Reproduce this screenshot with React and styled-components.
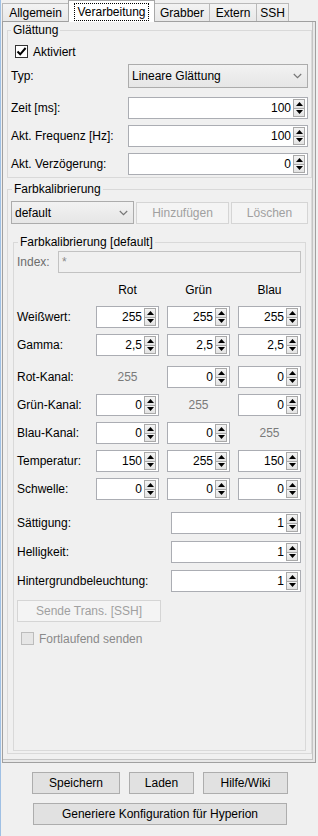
import React from 'react';
import styled, { createGlobalStyle } from 'styled-components';

const Global = createGlobalStyle`
  html, body { margin: 0; padding: 0; background: #f0f0f0; }
  body { font-family: "Liberation Sans", Arial, sans-serif; font-size: 12px; color: #000; }
  * { box-sizing: border-box; }
`;

const Window = styled.div`
  width: 318px;
  height: 836px;
  background: #f0f0f0;
  border-left: 1px solid #9fc0e4;
  padding-left: 1px;
  display: flex;
  flex-direction: column;
  overflow: hidden;
`;

const TabBar = styled.div`
  display: flex;
  align-items: flex-end;
  height: 21px;
  position: relative;
  z-index: 2;
`;

const Tab = styled.div`
  width: ${p => p.$w}px;
  height: ${p => (p.$active ? 22 : 18)}px;
  margin-bottom: ${p => (p.$active ? -1 : 0)}px;
  margin-left: ${p => (p.$first ? 0 : -1)}px;
  border: 1px solid ${p => (p.$active ? '#a8a8a8' : '#b9b9b9')};
  border-bottom: none;
  background: ${p => (p.$active ? '#ffffff' : 'linear-gradient(#f3f3f3, #e8e8e8)')};
  display: flex;
  align-items: center;
  justify-content: center;
  position: relative;
  z-index: ${p => (p.$active ? 2 : 1)};
  line-height: 14px;
`;

const TabFocus = styled.span`
  outline: 1px dotted #000;
  outline-offset: 1px;
  padding: 0 1px;
`;

const Panel = styled.div`
  width: 314px;
  height: 742px;
  border: 1px solid #a0a0a0;
  box-shadow: inset -2px -2px 0 #e8e8e8, inset -3px -3px 0 #c4c4c4;
  padding: 0 3px 8px 4px;
  display: flex;
  flex-direction: column;
`;

const Group = styled.div`
  margin: ${p => p.$m || '0'};
  padding: ${p => p.$pad};
  border: 1px solid #d9d9d9;
  display: flex;
  flex-direction: column;
  flex: ${p => (p.$grow ? '1 1 auto' : 'none')};
`;

const Title = styled.div`
  align-self: flex-start;
  margin: -8px 0 0 ${p => p.$ml || 0}px;
  padding: 0 2px;
  line-height: 14px;
  height: 14px;
  background: #f0f0f0;
  white-space: nowrap;
`;

const Row = styled.div`
  display: grid;
  grid-template-columns: ${p => p.$cols};
  column-gap: ${p => p.$gap || 0}px;
  align-items: center;
  height: ${p => p.$h || 22}px;
  margin-top: ${p => p.$mt || 0}px;
`;

const Label = styled.span`
  color: ${p => (p.$disabled ? '#6d6d6d' : '#000')};
  white-space: nowrap;
  line-height: 14px;
`;

const Muted = styled.span`
  color: #7a7a7a;
  text-align: center;
  line-height: 14px;
`;

const Header = styled.span`
  text-align: center;
  line-height: 14px;
`;

const CheckRow = styled.label`
  display: flex;
  align-items: center;
  gap: 5px;
  height: ${p => p.$h}px;
  margin-top: ${p => p.$mt || 0}px;
  padding-left: ${p => p.$pl}px;
  color: ${p => (p.$disabled ? '#8a8a8a' : '#000')};
`;

const CheckBox = styled.span`
  width: 13px;
  height: 13px;
  border: 1px solid ${p => (p.$disabled ? '#bcbcbc' : '#333333')};
  background: ${p => (p.$disabled ? '#e6e6e6' : '#ffffff')};
  display: flex;
  align-items: center;
  justify-content: center;
`;

const SpinBox = styled.div`
  height: 22px;
  display: flex;
  align-items: stretch;
  background: #fff;
  border: 1px solid #abadb3;
`;

const SpinValue = styled.div`
  flex: 1;
  text-align: right;
  padding-right: 2px;
  line-height: 20px;
`;

const SpinButtons = styled.div`
  width: 12px;
  margin: 1px 2px 1px 0;
  display: flex;
  flex-direction: column;
  border: 1px solid #a9a9a9;
`;

const SpinHalf = styled.div`
  flex: 1;
  display: flex;
  align-items: center;
  justify-content: center;
  background: linear-gradient(#f4f4f4, #e2e2e2);
  & + & { border-top: 1px solid #a9a9a9; }
`;

const ComboBox = styled.div`
  height: ${p => p.$h}px;
  display: flex;
  align-items: center;
  justify-content: space-between;
  padding: 0 5px 0 3px;
  border: 1px solid #acacac;
  background: linear-gradient(#f2f2f2, #e6e6e6);
`;

const TextField = styled.div`
  height: 22px;
  border: 1px solid #c2c2c2;
  background: #f0f0f0;
  color: #8a8a8a;
  padding-left: 3px;
  line-height: 20px;
`;

const Button = styled.button`
  width: ${p => p.$w}px;
  height: ${p => p.$h || 22}px;
  font-family: inherit;
  font-size: 12px;
  padding: 0;
  border: 1px solid ${p => (p.disabled ? '#d5d5d5' : '#adadad')};
  background: ${p => (p.disabled ? '#f4f4f4' : '#e1e1e1')};
  color: ${p => (p.disabled ? '#a0a0a0' : '#000')};
`;

const FarbRow = styled.div`
  display: grid;
  grid-template-columns: 123px 93px 77px;
  column-gap: 2px;
  align-items: center;
  height: 23px;
  margin-top: 5px;
`;

const ButtonBar = styled.div`
  display: flex;
  justify-content: center;
  gap: ${p => p.$gap || 0}px;
  margin-top: 9px;
`;

const Up = () => (
  <svg width="7" height="4" viewBox="0 0 7 4"><polygon points="0,4 3.5,0 7,4" fill="#000" /></svg>
);
const Down = () => (
  <svg width="7" height="4" viewBox="0 0 7 4"><polygon points="0,0 3.5,4 7,0" fill="#000" /></svg>
);

const Spinner = ({ value }) => (
  <SpinBox>
    <SpinValue>{value}</SpinValue>
    <SpinButtons>
      <SpinHalf><Up /></SpinHalf>
      <SpinHalf><Down /></SpinHalf>
    </SpinButtons>
  </SpinBox>
);

const Chevron = () => (
  <svg width="9" height="6" viewBox="0 0 9 6">
    <polyline points="0.8,1 4.5,4.6 8.2,1" fill="none" stroke="#777" strokeWidth="1.2" />
  </svg>
);

const Combo = ({ text, h }) => (
  <ComboBox $h={h}>
    <span>{text}</span>
    <Chevron />
  </ComboBox>
);

const Check = () => (
  <svg width="11" height="11" viewBox="0 0 11 11">
    <polyline points="1.5,5.5 4.2,8.3 9.6,2" fill="none" stroke="#000" strokeWidth="2" />
  </svg>
);

const COLS3 = '71px 63px 63px 63px';
const COLS1 = '154px 130px';

const ColorRow = ({ label, values, mt }) => (
  <Row $cols={COLS3} $gap={8} $mt={mt}>
    <Label>{label}</Label>
    {values.map((v, i) => (v === null ? <Muted key={i}>255</Muted> : <Spinner key={i} value={v} />))}
  </Row>
);

export default function App() {
  const tabs = [
    { t: 'Allgemein', w: 67 },
    { t: 'Verarbeitung', w: 87, active: true },
    { t: 'Grabber', w: 56 },
    { t: 'Extern', w: 48 },
    { t: 'SSH', w: 33 },
  ];
  return (
    <>
      <Global />
      <Window>
        <TabBar>
          {tabs.map((tb, i) => (
            <Tab key={tb.t} $w={tb.w} $active={tb.active} $first={i === 0}>
              {tb.active ? <TabFocus>{tb.t}</TabFocus> : tb.t}
            </Tab>
          ))}
        </TabBar>
        <Panel>
          <Group $pad="0 3px 2px 3px" $m="8px 0 0 0">
            <Title>Glättung</Title>
            <CheckRow $h={17} $pl={4} $mt={6}>
              <CheckBox><Check /></CheckBox>
              Aktiviert
            </CheckRow>
            <Row $cols="117px 1fr" $h={24} $mt={4}>
              <Label>Typ:</Label>
              <Combo text="Lineare Glättung" h={24} />
            </Row>
            <Row $cols="117px 1fr" $mt={9}>
              <Label>Zeit [ms]:</Label>
              <Spinner value="100" />
            </Row>
            <Row $cols="117px 1fr" $mt={6}>
              <Label>Akt. Frequenz [Hz]:</Label>
              <Spinner value="100" />
            </Row>
            <Row $cols="117px 1fr" $mt={6}>
              <Label>Akt. Verzögerung:</Label>
              <Spinner value="0" />
            </Row>
          </Group>

          <Group $pad="0 3px 2px 3px" $m="11px 0 0 0" $grow>
            <Title $ml={1}>Farbkalibrierung</Title>
            <FarbRow>
              <Combo text="default" h={23} />
              <Button disabled $w={93}>Hinzufügen</Button>
              <Button disabled $w={77}>Löschen</Button>
            </FarbRow>

            <Group $pad="0 4px 4px 3px" $m="18px 2px 0 2px" $grow>
              <Title $ml={1}>Farbkalibrierung [default]</Title>
              <Row $cols="41px 243px" $mt={2}>
                <Label $disabled>Index:</Label>
                <TextField>*</TextField>
              </Row>
              <Row $cols={COLS3} $gap={8} $h={16} $mt={9}>
                <span />
                <Header>Rot</Header>
                <Header>Grün</Header>
                <Header>Blau</Header>
              </Row>
              <ColorRow label="Weißwert:" values={['255', '255', '255']} mt={8} />
              <ColorRow label="Gamma:" values={['2,5', '2,5', '2,5']} mt={6} />
              <ColorRow label="Rot-Kanal:" values={[null, '0', '0']} mt={10} />
              <ColorRow label="Grün-Kanal:" values={['0', null, '0']} mt={6} />
              <ColorRow label="Blau-Kanal:" values={['0', '0', null]} mt={6} />
              <ColorRow label="Temperatur:" values={['150', '255', '150']} mt={6} />
              <ColorRow label="Schwelle:" values={['0', '0', '0']} mt={6} />
              <Row $cols={COLS1} $mt={12}>
                <Label>Sättigung:</Label>
                <Spinner value="1" />
              </Row>
              <Row $cols={COLS1} $mt={7}>
                <Label>Helligkeit:</Label>
                <Spinner value="1" />
              </Row>
              <Row $cols={COLS1} $mt={7}>
                <Label>Hintergrundbeleuchtung:</Label>
                <Spinner value="1" />
              </Row>
              <Row $cols="144px" $mt={8}>
                <Button disabled $w={144}>Sende Trans. [SSH]</Button>
              </Row>
              <CheckRow $h={19} $mt={7} $pl={4} $disabled>
                <CheckBox $disabled />
                Fortlaufend senden
              </CheckRow>
            </Group>
          </Group>
        </Panel>
        <ButtonBar $gap={9}>
          <Button $w={88}>Speichern</Button>
          <Button $w={65}>Laden</Button>
          <Button $w={85}>Hilfe/Wiki</Button>
        </ButtonBar>
        <ButtonBar>
          <Button $w={254}>Generiere Konfiguration für Hyperion</Button>
        </ButtonBar>
      </Window>
    </>
  );
}
